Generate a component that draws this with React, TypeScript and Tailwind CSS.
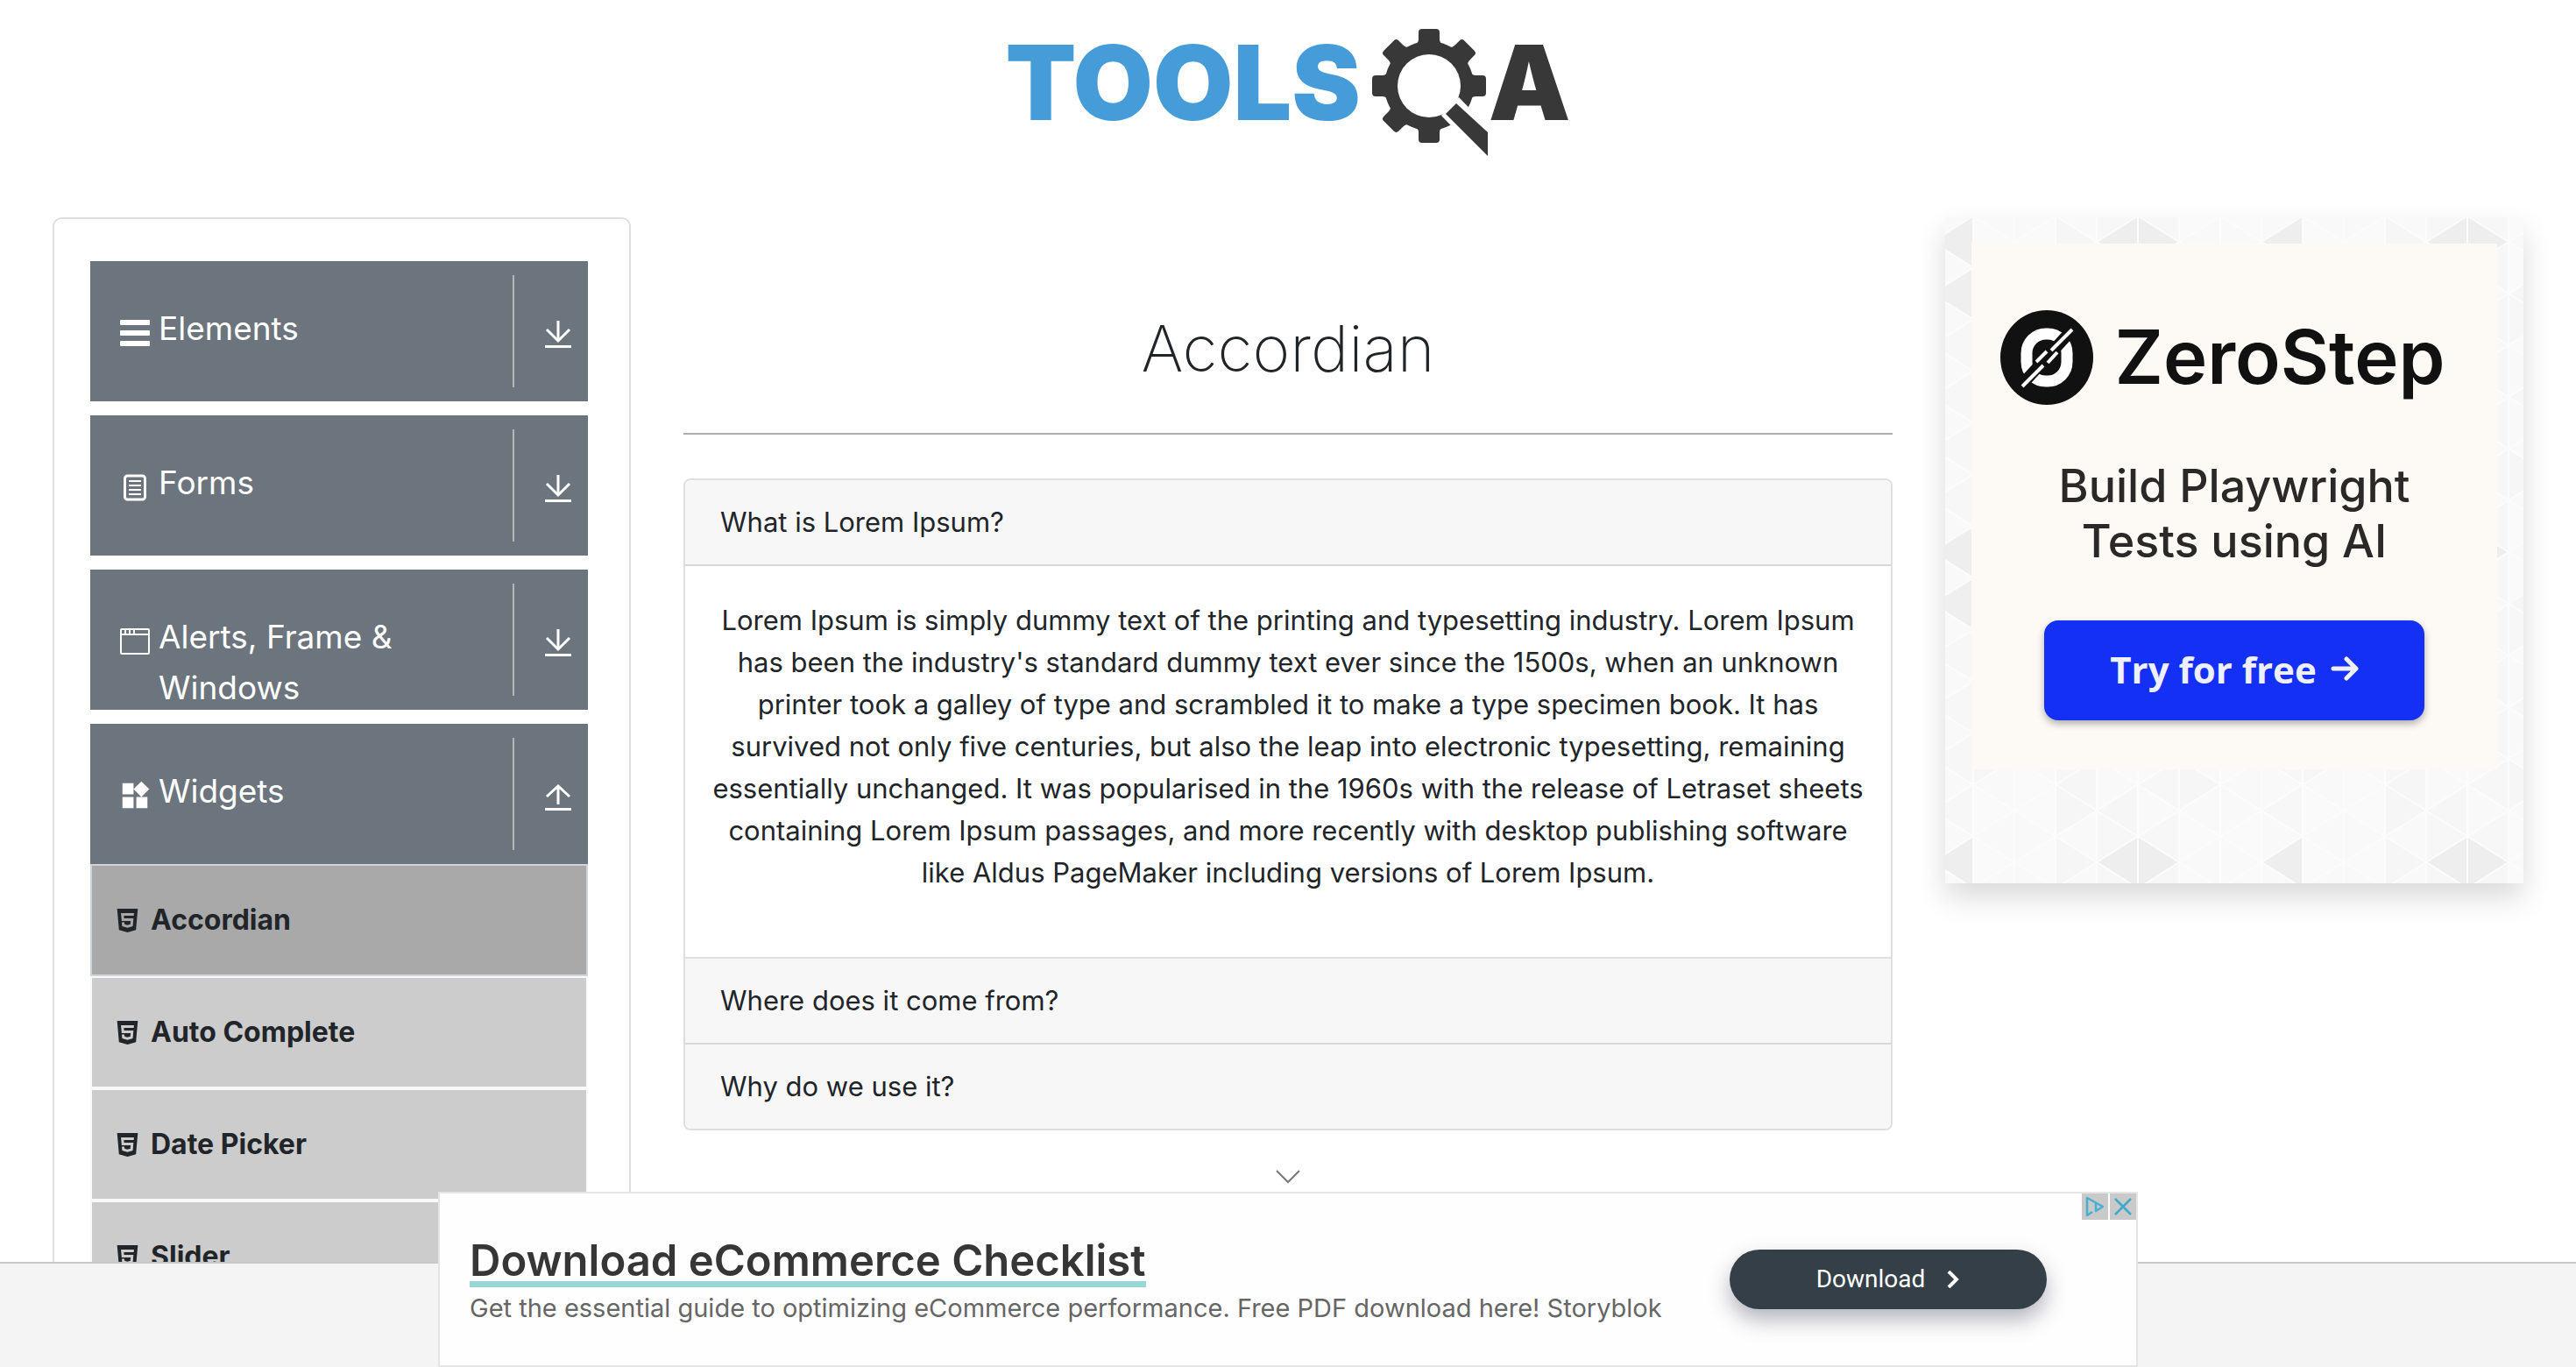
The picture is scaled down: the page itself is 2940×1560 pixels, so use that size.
import React from "react";
import { MdWidgets } from "react-icons/md";
import { AiFillHtml5 } from "react-icons/ai";

const COL = 47;
const SIDE = 59;

function shadeFor(col: number, row: number, pointsLeft: boolean) {
  if (pointsLeft && (col === 0 || col === 4) && row === 0) return "#eeeeee";
  if (pointsLeft && col === 0 && row === 1) return "#efefef";
  if (!pointsLeft && col === 5 && row === 0) return "#eeeeee";
  if (pointsLeft && col === 2 && row === 2) return "#f0f0f0";
  const n = (col * 7 + row * 5 + (pointsLeft ? 3 : 0) + col * row) % 5;
  return ["#f9f9f9", "#f6f6f6", "#fafafa", "#f7f7f7", "#f9f9f9"][n];
}

function TrianglePattern() {
  const shapes: React.ReactNode[] = [];
  for (let c = 0; c < 8; c++) {
    for (let k = -1; k < 7; k++) {
      const row = (k + 6) % 6;
      const x0 = c * COL;
      const x1 = x0 + COL;
      const half = SIDE / 2;
      const yLeft = k * SIDE + (c % 2 ? half : 0);
      const yRight = k * SIDE + (c % 2 ? 0 : half);
      shapes.push(
        <polygon
          key={`l${c}-${k}`}
          points={`${x0},${yLeft} ${x1},${yLeft - half} ${x1},${yLeft + half}`}
          fill={shadeFor(c, row, true)}
        />,
        <polygon
          key={`r${c}-${k}`}
          points={`${x1},${yRight} ${x0},${yRight - half} ${x0},${yRight + half}`}
          fill={shadeFor(c, row, false)}
        />
      );
    }
  }
  return (
    <svg className="absolute inset-0 h-full w-full" aria-hidden="true">
      <defs>
        <pattern id="tri" x="-15" y="28" width={COL * 8} height={SIDE * 6} patternUnits="userSpaceOnUse">
          <g stroke="#fcfcfc" strokeWidth="2" strokeLinejoin="round">
            {shapes}
          </g>
        </pattern>
      </defs>
      <rect width="100%" height="100%" fill="url(#tri)" />
    </svg>
  );
}

function GearMark() {
  return (
    <svg viewBox="0 0 134 146" className="h-[146px] w-[134px]" fill="#383838" aria-hidden="true">
      <defs>
        <mask id="gearCut">
          <rect width="134" height="146" fill="#fff" />
          <circle cx="66" cy="65" r="36" fill="#000" />
          <path d="M80 99 L100 78 L134 113 V146 H126 Z" fill="#000" />
        </mask>
      </defs>
      <g mask="url(#gearCut)">
        <circle cx="66" cy="65" r="51" />
        {[0, 45, 90, 135, 180, 225, 270, 315].map((a) => (
          <path
            key={a}
            transform={`rotate(${a} 66 65)`}
            d="M47 20 Q54 17 54 12 V4 Q54 0 58 0 H74 Q78 0 78 4 V12 Q78 17 85 20 Z"
          />
        ))}
      </g>
      <path d="M85 97 L97 85 L133 118 V145 Z" />
    </svg>
  );
}

function BarsIcon() {
  return (
    <svg viewBox="0 0 34 32" className="h-8 w-[34px]" fill="currentColor" aria-hidden="true">
      <rect y="1" width="34" height="6" rx="1" />
      <rect y="13" width="34" height="6" rx="1" />
      <rect y="25" width="34" height="6" rx="1" />
    </svg>
  );
}

function FormIcon() {
  return (
    <svg viewBox="0 0 34 32" className="h-8 w-[34px]" fill="none" stroke="currentColor" aria-hidden="true">
      <rect x="5.500" y="3" width="23" height="27" rx="3" strokeWidth="3" />
      <path d="M10 9h14M10 14h14M10 19h14M10 24h14" strokeWidth="2" />
    </svg>
  );
}

function WindowIcon() {
  return (
    <svg viewBox="0 0 34 32" className="h-8 w-[34px]" fill="none" stroke="currentColor" aria-hidden="true">
      <rect x="1" y="2" width="32" height="28" rx="1" strokeWidth="2" />
      <path d="M1 8h32" strokeWidth="2" />
      <path d="M6 3v4M11 3v4M16 3v4" strokeWidth="2" />
    </svg>
  );
}

function ArrowIcon({ up = false }: { up?: boolean }) {
  return (
    <svg viewBox="0 0 30 32" className="h-8 w-[30px]" fill="none" stroke="currentColor" strokeWidth="3" aria-hidden="true">
      <path d={up ? "M15 24V3M2 15L15 3L28 15" : "M15 0V22M2 10L15 23L28 10"} />
      <path d="M0 29.500h30" />
    </svg>
  );
}

type Group = { label: string; icon: React.ReactNode; items?: string[] };

const groups: Group[] = [
  { label: "Elements", icon: <BarsIcon /> },
  { label: "Forms", icon: <FormIcon /> },
  { label: "Alerts, Frame & Windows", icon: <WindowIcon /> },
  {
    label: "Widgets",
    icon: <MdWidgets size={38} />,
    items: ["Accordian", "Auto Complete", "Date Picker", "Slider"],
  },
];

function Sidebar() {
  return (
    <nav className="rounded-[10px] border-2 border-[#dfdfdf] pt-12 pr-[47px] pb-12 pl-[41px]">
      <div className="flex flex-col gap-4">
        {groups.map((g) => (
          <div key={g.label}>
            <button
              type="button"
              aria-expanded={!!g.items}
              className="flex h-[160px] w-full items-stretch overflow-hidden bg-[#6c757d] py-4 text-left text-white"
            >
              <span className="flex flex-1 items-start pt-8">
                <span className="flex h-[58px] w-[78px] shrink-0 items-center justify-center pt-[10px] pl-6">
                  {g.icon}
                </span>
                <span className="w-[320px] text-[37px] leading-[58px]">{g.label}</span>
              </span>
              <span className="flex w-[86px] shrink-0 items-center justify-center border-l-2 border-[#b9b7b4] pt-2 pl-4">
                <ArrowIcon up={!!g.items} />
              </span>
            </button>
            {g.items && (
              <ul>
                {g.items.map((item, i) => (
                  <li key={item}>
                    <a
                      href="#"
                      className={
                        i === 0
                          ? "flex h-32 items-center gap-[10px] border-2 border-[#ced4da] bg-[#a9a9a9] pl-6 text-[32px] font-bold text-[#212529]"
                          : "flex h-32 items-center gap-[10px] border-2 border-[#f8f9fa] bg-[#cccccc] pl-6 text-[32px] font-bold text-[#212529]"
                      }
                    >
                      <AiFillHtml5 size={33} />
                      {item}
                    </a>
                  </li>
                ))}
              </ul>
            )}
          </div>
        ))}
      </div>
    </nav>
  );
}

function Accordion() {
  const head =
    "flex h-[98px] w-full items-center border-b-2 border-[#d8d8d8] bg-[#f7f7f7] px-10 text-left text-[31px]";
  return (
    <div className="overflow-hidden rounded-lg border-2 border-[#dfdfdf]">
      <button type="button" aria-expanded="true" className={head}>
        What is Lorem Ipsum?
      </button>
      <div className="border-b-2 border-[#dfdfdf] px-7 pt-[38px] pb-[72px]">
        <p className="text-center text-[31px] leading-[48px]">
          Lorem Ipsum is simply dummy text of the printing and typesetting industry. Lorem Ipsum has been the
          industry's standard dummy text ever since the 1500s, when an unknown printer took a galley of type and
          scrambled it to make a type specimen book. It has survived not only five centuries, but also the leap into
          electronic typesetting, remaining essentially unchanged. It was popularised in the 1960s with the release of
          Letraset sheets containing Lorem Ipsum passages, and more recently with desktop publishing software like
          Aldus PageMaker including versions of Lorem Ipsum.
        </p>
      </div>
      <button type="button" aria-expanded="false" className={head}>
        Where does it come from?
      </button>
      <button
        type="button"
        aria-expanded="false"
        className="flex h-24 w-full items-center bg-[#f7f7f7] px-10 text-left text-[31px]"
      >
        Why do we use it?
      </button>
    </div>
  );
}

function ZeroStepAd() {
  return (
    <aside className="relative h-[760px] px-[30px] pt-[30px] shadow-[0_16px_32px_rgba(0,0,0,0.15)]">
      <TrianglePattern />
      <div className="relative flex h-[600px] flex-col items-center bg-[#fdf9f4] pt-[70px] text-[#111]">
        <div className="flex h-[120px] items-center gap-6 pr-[26px]">
          <svg viewBox="0 0 106 108" className="h-[108px] w-[106px]" aria-hidden="true">
            <ellipse cx="53" cy="54" rx="53" ry="54" fill="#111" />
            <rect x="30" y="27" width="46" height="54" rx="22" fill="none" stroke="#fff" strokeWidth="13" />
            <path d="M18 92L86 18" stroke="#111" strokeWidth="13" />
            <path d="M25 87L49 63M58 46L82 22M41 59L53 47M54 60L65 48" stroke="#fff" strokeWidth="4" />
          </svg>
          <span className="text-[85px] leading-[120px] font-semibold">ZeroStep</span>
        </div>
        <p className="mt-[55px] text-center text-[52px] leading-[63px] font-medium text-[#2b2927]">
          Build Playwright
          <br />
          Tests using AI
        </p>
        <button
          type="button"
          className="mt-[59px] flex h-[114px] w-[434px] items-center justify-center gap-4 rounded-2xl bg-[#1530f5] pb-1 text-[42px] font-bold text-[#eef0ff] shadow-[0_4px_8px_rgba(0,0,0,0.3)]"
        >
          <span className="font-['Open_Sans']">Try for free</span>
          <svg viewBox="0 0 32 28" className="h-7 w-8" fill="none" stroke="currentColor" strokeWidth="5" strokeLinecap="round" strokeLinejoin="round" aria-hidden="true">
            <path d="M3 14H28M18 3L29 14L18 25" />
          </svg>
        </button>
      </div>
    </aside>
  );
}

function BannerAd() {
  return (
    <div className="absolute bottom-0 left-1/2 flex h-[200px] w-[1940px] -translate-x-1/2 items-center justify-between border-2 border-[#e5e5e6] bg-[#fefefe] pr-[102px] pl-[34px]">
      <div className="pt-1">
        <a href="#" className="inline-block border-b-[7px] border-[#97d7d7] pt-2 text-[49px] leading-[46px] font-semibold text-[#363636]">
          Download eCommerce Checklist
        </a>
        <p className="text-[29px] leading-[48px] text-[#666]">
          Get the essential guide to optimizing eCommerce performance. Free PDF download here! Storyblok
        </p>
      </div>
      <button
        type="button"
        className="flex h-[68px] w-[362px] items-center justify-center gap-6 rounded-full bg-[#353f47] font-[Roboto] text-[28px] text-white shadow-[0_12px_24px_rgba(40,40,70,0.35)]"
      >
        Download
        <svg viewBox="0 0 16 20" className="h-5 w-4" fill="none" stroke="currentColor" strokeWidth="4" aria-hidden="true">
          <path d="M3 1L12 10L3 19" />
        </svg>
      </button>
      <div className="absolute top-0 right-0 flex gap-0.5">
        <button type="button" aria-label="Ad choices" className="flex size-[30px] items-center justify-center bg-[#c9c9c9]">
          <svg viewBox="0 0 24 24" className="size-6" fill="none" stroke="#45b1d0" strokeWidth="2.500" strokeLinejoin="round" aria-hidden="true">
            <path d="M9 18L3 22V2L21 12L13 17V8" />
          </svg>
        </button>
        <button type="button" aria-label="Close ad" className="flex size-[30px] items-center justify-center bg-[#c9c9c9]">
          <svg viewBox="0 0 20 20" className="size-5" fill="none" stroke="#3fa9cc" strokeWidth="2.500" aria-hidden="true">
            <path d="M1 1L19 19M19 1L1 19" />
          </svg>
        </button>
      </div>
    </div>
  );
}

export default function App() {
  return (
    <div className="relative h-screen overflow-hidden bg-white font-[Inter,sans-serif] text-[#212529]">
      <header className="flex h-[248px] items-start justify-center pt-[33px]">
        <a href="#" className="flex items-start" aria-label="ToolsQA">
          <span className="pr-3 text-[118px] leading-[122px] font-black text-[#459cd9]">TOOLS</span>
          <GearMark />
          <span className="text-[118px] leading-[122px] font-black text-[#383838]">A</span>
        </a>
      </header>
      <div className="grid grid-cols-4 items-start gap-[60px] px-[60px]">
        <Sidebar />
        <main className="col-span-2 pt-[100px]">
          <h1 className="border-b-2 border-[#adadad] pb-[46px] text-center text-[73px] leading-[100px] font-extralight">
            Accordian
          </h1>
          <div className="mt-[50px]">
            <Accordion />
          </div>
        </main>
        <ZeroStepAd />
      </div>
      <footer className="absolute inset-x-0 bottom-0 h-[120px] border-t-2 border-[#c9c9c9] bg-[#f4f4f4]" />
      <button type="button" aria-label="Collapse ad" className="absolute bottom-[209px] left-1/2 flex h-4 w-7 -translate-x-1/2 items-center justify-center">
        <svg viewBox="0 0 28 16" className="h-4 w-7" fill="none" stroke="#777" strokeWidth="2" aria-hidden="true">
          <path d="M1 1L14 14L27 1" />
        </svg>
      </button>
      <BannerAd />
    </div>
  );
}
